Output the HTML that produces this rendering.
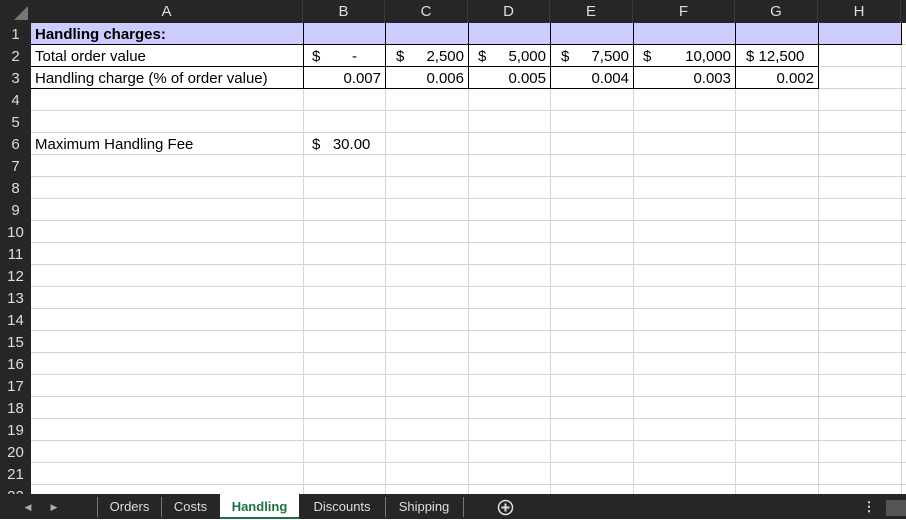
<!DOCTYPE html><html><head><style>
*{margin:0;padding:0;box-sizing:border-box}
body{width:906px;height:519px;overflow:hidden;background:#fff;font-family:"Liberation Sans",sans-serif;position:relative}
.a{position:absolute}
.ch{top:0;height:23px;background:#262626;color:#ddd;font-size:15px;text-align:center;line-height:24px;border-right:1px solid #3a3a3a}
.rh{left:0;width:31px;height:22px;background:#262626;color:#ddd;font-size:15px;text-align:center;line-height:24px}
.vl{top:23px;width:1px;height:471px;background:#d4d4d4}
.hl{left:31px;width:875px;height:1px;background:#d4d4d4}
.t{font-size:15px;line-height:24px;color:#000;white-space:pre}
.tab{top:494px;height:25px;line-height:26px;font-size:13px;color:#ddd;text-align:center}
</style></head><body>
<div class="a" style="left:0;top:0;width:906px;height:23px;background:#262626"></div>
<div class="a" style="left:0;top:0;width:31px;height:494px;background:#262626"></div>
<svg class="a" style="left:14px;top:6px" width="14" height="14"><polygon points="14,0 14,14 0,14" fill="#777"/></svg>
<div class="a ch" style="left:31px;width:272px">A</div>
<div class="a ch" style="left:303px;width:82px">B</div>
<div class="a ch" style="left:385px;width:83px">C</div>
<div class="a ch" style="left:468px;width:82px">D</div>
<div class="a ch" style="left:550px;width:83px">E</div>
<div class="a ch" style="left:633px;width:102px">F</div>
<div class="a ch" style="left:735px;width:83px">G</div>
<div class="a ch" style="left:818px;width:83px">H</div>
<div id="rows"></div>
<script>
var h='';for(var i=1;i<=22;i++){var y=23+(i-1)*22;h+='<div class="a rh" style="top:'+y+'px">'+i+'</div>';h+='<div class="a hl" style="top:'+(y+21)+'px"></div>';}
[303,385,468,550,633,735,818,901].forEach(function(x){h+='<div class="a vl" style="left:'+x+'px"></div>'});
document.getElementById('rows').innerHTML=h;
</script>
<div class="a" style="left:31px;top:23px;width:871px;height:22px;background:#ccccff;border-bottom:1px solid #000"></div>
<script>
var h2='';[303,385,468,550,633,735,818].forEach(function(x){h2+='<div class="a" style="left:'+x+'px;top:23px;width:1px;height:22px;background:#000"></div>'});
[303,385,468,550,633,735,818].forEach(function(x){h2+='<div class="a" style="left:'+x+'px;top:45px;width:1px;height:44px;background:#000"></div>'});
h2+='<div class="a" style="left:901px;top:23px;width:1px;height:22px;background:#000"></div>';
h2+='<div class="a" style="left:31px;top:66px;width:787px;height:1px;background:#000"></div>';
h2+='<div class="a" style="left:31px;top:88px;width:787px;height:1px;background:#000"></div>';
document.body.insertAdjacentHTML('beforeend',h2);
</script>
<div class="a t" style="left:35px;top:23px;font-weight:bold">Handling charges:</div>
<div class="a t" style="left:35px;top:45px">Total order value</div>
<div class="a t" style="left:35px;top:67px">Handling charge (% of order value)</div>
<div class="a t" style="left:35px;top:133px">Maximum Handling Fee</div>
<div class="a t" style="left:312px;top:45px">$</div><div class="a t" style="left:352px;top:45px">-</div>
<div class="a t" style="left:396px;top:45px">$</div><div class="a t" style="left:385px;top:45px;width:79px;text-align:right">2,500</div>
<div class="a t" style="left:478px;top:45px">$</div><div class="a t" style="left:468px;top:45px;width:78px;text-align:right">5,000</div>
<div class="a t" style="left:561px;top:45px">$</div><div class="a t" style="left:550px;top:45px;width:79px;text-align:right">7,500</div>
<div class="a t" style="left:643px;top:45px">$</div><div class="a t" style="left:633px;top:45px;width:98px;text-align:right">10,000</div>
<div class="a t" style="left:746px;top:45px">$ 12,500</div>
<div class="a t" style="left:303px;top:67px;width:78px;text-align:right">0.007</div>
<div class="a t" style="left:385px;top:67px;width:79px;text-align:right">0.006</div>
<div class="a t" style="left:468px;top:67px;width:78px;text-align:right">0.005</div>
<div class="a t" style="left:550px;top:67px;width:79px;text-align:right">0.004</div>
<div class="a t" style="left:633px;top:67px;width:98px;text-align:right">0.003</div>
<div class="a t" style="left:735px;top:67px;width:79px;text-align:right">0.002</div>
<div class="a t" style="left:312px;top:133px">$   30.00</div>
<div class="a" style="left:0;top:494px;width:906px;height:25px;background:#262626"></div>
<div class="a tab" style="left:22px;width:12px;color:#aaa;font-size:9px">&#9664;</div>
<div class="a tab" style="left:48px;width:12px;color:#aaa;font-size:9px">&#9654;</div>
<div class="a" style="left:97px;top:497px;width:1px;height:20px;background:#777"></div>
<div class="a tab" style="left:98px;width:63px">Orders</div>
<div class="a" style="left:161px;top:497px;width:1px;height:20px;background:#777"></div>
<div class="a tab" style="left:162px;width:57px">Costs</div>
<div class="a tab" style="left:220px;width:79px;background:#fff;color:#1e7145;font-weight:bold;border-bottom:2px solid #1e7145">Handling</div>
<div class="a tab" style="left:300px;width:84px">Discounts</div>
<div class="a" style="left:385px;top:497px;width:1px;height:20px;background:#777"></div>
<div class="a tab" style="left:386px;width:76px">Shipping</div>
<div class="a" style="left:463px;top:497px;width:1px;height:20px;background:#777"></div>
<svg class="a" style="left:497px;top:499px" width="17" height="17"><circle cx="8.5" cy="8.5" r="7" fill="none" stroke="#ddd" stroke-width="1.5"/><path d="M8.5 4.5v8M4.5 8.5h8" stroke="#ddd" stroke-width="2"/></svg>
<div class="a tab" style="left:862px;width:14px;font-weight:bold">&#8942;</div>
<div class="a" style="left:886px;top:500px;width:20px;height:16px;background:#555"></div>
</body></html>
